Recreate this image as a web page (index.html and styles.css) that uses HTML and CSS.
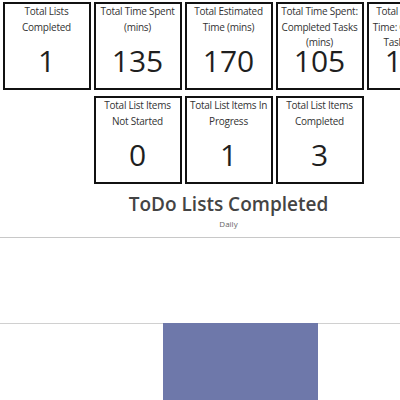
FILE: index.html
```html
<!DOCTYPE html>
<html>
<head>
<meta charset="utf-8">
<link rel="stylesheet" href="styles.css">
</head>
<body>
<div class="page">
  <div class="cards">
    <div class="card"><div class="label">Total Lists Completed</div><div class="value">1</div></div>
    <div class="card"><div class="label">Total Time Spent (mins)</div><div class="value">135</div></div>
    <div class="card"><div class="label">Total Estimated Time (mins)</div><div class="value">170</div></div>
    <div class="card"><div class="label">Total Time Spent: Completed Tasks (mins)</div><div class="value">105</div></div>
    <div class="card"><div class="label">Total Estimated Time: Completed Tasks (mins)</div><div class="value">140</div></div>
    <div class="card"><div class="label">Total List Items Not Started</div><div class="value">0</div></div>
    <div class="card"><div class="label">Total List Items In Progress</div><div class="value">1</div></div>
    <div class="card"><div class="label">Total List Items Completed</div><div class="value">3</div></div>
  </div>
  <div class="chart-head">
    <div class="chart-title">ToDo Lists Completed</div>
    <div class="chart-sub">Daily</div>
  </div>
  <div class="chart">
    <div class="grid-row"></div>
    <div class="plot">
      <div class="bar"></div>
    </div>
  </div>
</div>
</body>
</html>
```
FILE: styles.css
```css
html, body {
  margin: 0;
  padding: 0;
  background: #fff;
  overflow: hidden;
}
body {
  font-family: "Open Sans", "Noto Sans", sans-serif;
  color: #252423;
}
.page {
  width: 457px;
}
.cards {
  display: flex;
  flex-wrap: wrap;
  justify-content: center;
  column-gap: 3px;
  row-gap: 6px;
  padding-top: 2px;
}
.card {
  box-sizing: border-box;
  width: 88px;
  height: 88px;
  border: 2px solid #111;
  text-align: center;
  overflow: hidden;
}
.label {
  height: 46.5px;
  padding: 0 1px;
  box-sizing: border-box;
  font-size: 10px;
  letter-spacing: -0.25px;
  line-height: 15.5px;
  color: #333;
}
.value {
  font-size: 30px;
  line-height: 20px;
  color: #1f1f1f;
  white-space: nowrap;
}
.chart-head {
  text-align: center;
  padding-top: 8px;
}
.chart-title {
  font-size: 19px;
  font-weight: 600;
  line-height: 24px;
  color: #444;
}
.chart-sub {
  font-size: 8px;
  line-height: 12px;
  margin-top: 2px;
  color: #666;
}
.chart {
  margin-top: 7px;
  width: 400px;
}
.grid-row {
  height: 85px;
  border-top: 1px solid #c8c8c8;
}
.plot {
  border-top: 1px solid #d0d0d0;
  height: 100px;
  padding-left: 163px;
}
.bar {
  width: 155px;
  height: 100px;
  background: #6e78aa;
  margin-top: -1px;
}
```
